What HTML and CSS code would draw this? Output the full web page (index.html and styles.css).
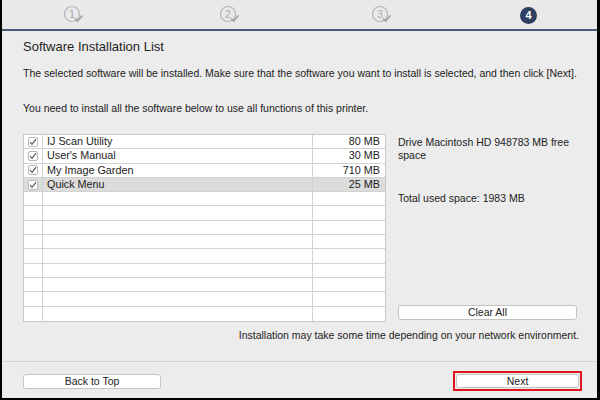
FILE: index.html
```html
<!DOCTYPE html>
<html>
<head>
<meta charset="utf-8">
<link rel="stylesheet" href="styles.css">
</head>
<body>
<div class="frame">
  <div class="steps">
    <div class="step done">
      <svg width="22" height="20" viewBox="0 0 22 20"><circle cx="9" cy="9" r="7.5" fill="none" stroke="#b4b4b4" stroke-width="1.2"/><text x="9" y="12.5" text-anchor="middle" class="stepnum">1</text><path d="M12 13.5 L14.5 16 L19.5 10.5" fill="none" stroke="#a0a0a0" stroke-width="1.6"/></svg>
    </div>
    <div class="step done">
      <svg width="22" height="20" viewBox="0 0 22 20"><circle cx="9" cy="9" r="7.5" fill="none" stroke="#b4b4b4" stroke-width="1.2"/><text x="9" y="12.5" text-anchor="middle" class="stepnum">2</text><path d="M12 13.5 L14.5 16 L19.5 10.5" fill="none" stroke="#a0a0a0" stroke-width="1.6"/></svg>
    </div>
    <div class="step done">
      <svg width="22" height="20" viewBox="0 0 22 20"><circle cx="9" cy="9" r="7.5" fill="none" stroke="#b4b4b4" stroke-width="1.2"/><text x="9" y="12.5" text-anchor="middle" class="stepnum">3</text><path d="M12 13.5 L14.5 16 L19.5 10.5" fill="none" stroke="#a0a0a0" stroke-width="1.6"/></svg>
    </div>
    <div class="step current"><span class="cur">4</span></div>
  </div>
  <div class="content">
    <h1 class="title">Software Installation List</h1>
    <p class="para p1">The selected software will be installed. Make sure that the software you want to install is selected, and then click [Next].</p>
    <p class="para p2">You need to install all the software below to use all functions of this printer.</p>
    <div class="main">
      <div class="table">
        <div class="row"><div class="c-chk"><span class="box"><svg width="8" height="8" viewBox="0 0 8 8"><path d="M1 4.2 L3 6.4 L7 1.2" fill="none" stroke="#555" stroke-width="1.1"/></svg></span></div><div class="c-name">IJ Scan Utility</div><div class="c-size">80 MB</div></div>
        <div class="row"><div class="c-chk"><span class="box"><svg width="8" height="8" viewBox="0 0 8 8"><path d="M1 4.2 L3 6.4 L7 1.2" fill="none" stroke="#555" stroke-width="1.1"/></svg></span></div><div class="c-name">User's Manual</div><div class="c-size">30 MB</div></div>
        <div class="row"><div class="c-chk"><span class="box"><svg width="8" height="8" viewBox="0 0 8 8"><path d="M1 4.2 L3 6.4 L7 1.2" fill="none" stroke="#555" stroke-width="1.1"/></svg></span></div><div class="c-name">My Image Garden</div><div class="c-size">710 MB</div></div>
        <div class="row sel"><div class="c-chk"><span class="box"><svg width="8" height="8" viewBox="0 0 8 8"><path d="M1 4.2 L3 6.4 L7 1.2" fill="none" stroke="#555" stroke-width="1.1"/></svg></span></div><div class="c-name">Quick Menu</div><div class="c-size">25 MB</div></div>
        <div class="row"><div class="c-chk"></div><div class="c-name"></div><div class="c-size"></div></div>
        <div class="row"><div class="c-chk"></div><div class="c-name"></div><div class="c-size"></div></div>
        <div class="row"><div class="c-chk"></div><div class="c-name"></div><div class="c-size"></div></div>
        <div class="row"><div class="c-chk"></div><div class="c-name"></div><div class="c-size"></div></div>
        <div class="row"><div class="c-chk"></div><div class="c-name"></div><div class="c-size"></div></div>
        <div class="row"><div class="c-chk"></div><div class="c-name"></div><div class="c-size"></div></div>
        <div class="row"><div class="c-chk"></div><div class="c-name"></div><div class="c-size"></div></div>
        <div class="row"><div class="c-chk"></div><div class="c-name"></div><div class="c-size"></div></div>
        <div class="row last"><div class="c-chk"></div><div class="c-name"></div><div class="c-size"></div></div>
      </div>
      <div class="side">
        <p class="drive">Drive Macintosh HD 948783 MB free space</p>
        <p class="total">Total used space: 1983 MB</p>
        <div class="spacer"></div>
        <button class="btn clear">Clear All</button>
      </div>
    </div>
    <p class="note">Installation may take some time depending on your network environment.</p>
  </div>
  <div class="footer">
    <button class="btn back">Back to Top</button>
    <div class="next-wrap"><button class="btn next">Next</button></div>
  </div>
</div>
</body>
</html>
```
FILE: styles.css
```css
* { box-sizing: border-box; }
html, body { margin: 0; padding: 0; }
body {
  width: 600px;
  height: 400px;
  background: #000;
  font-family: "Liberation Sans", Arial, sans-serif;
  color: #222;
  overflow: hidden;
}
.frame {
  margin: 0 3px 0 2px;
  height: 398px;
  background: #ececec;
  display: flex;
  flex-direction: column;
}
.steps {
  height: 31px;
  border-bottom: 2px solid #4b5a78;
  background: #e9e9e9;
  display: flex;
  align-items: center;
  padding-top: 1px;
}
.step {
  position: relative;
  display: flex;
  justify-content: center;
}
.step:nth-child(1) { margin-left: 61px; }
.step:nth-child(2) { margin-left: 134px; }
.step:nth-child(3) { margin-left: 130px; }
.step:nth-child(4) { margin-left: 127px; }
.stepnum {
  font-family: "Liberation Sans", Arial, sans-serif;
  font-size: 10px;
  fill: #a8a8a8;
}
.cur {
  width: 17px;
  height: 17px;
  border-radius: 50%;
  background: #2f3f62;
  color: #fff;
  font-size: 11px;
  font-weight: bold;
  display: flex;
  align-items: center;
  justify-content: center;
}
.content {
  padding: 8px 0 0 21px;
  flex: 1;
  display: flex;
  flex-direction: column;
}
.title {
  margin: 0;
  font-size: 13px;
  font-weight: normal;
  color: #1e1e1e;
  line-height: 16px;
}
.para {
  margin: 0;
  font-size: 10.5px;
  line-height: 13px;
  color: #222;
}
.p1 { margin-top: 12px; }
.p2 { margin-top: 22px; }
.main {
  display: flex;
  margin-top: 19px;
}
.table {
  width: 363px;
  background: #fff;
  border: 1px solid #c8c8c8;
  display: flex;
  flex-direction: column;
}
.row {
  height: 14.3px;
  display: flex;
  border-bottom: 1px solid #d2d2d2;
  font-size: 10.8px;
  line-height: 13px;
}
.row.last { border-bottom: none; }
.row.sel { background: #dcdcdc; }
.c-chk {
  width: 19px;
  border-right: 1px solid #d2d2d2;
  display: flex;
  align-items: center;
  justify-content: center;
}
.c-name {
  width: 270px;
  border-right: 1px solid #d2d2d2;
  padding-left: 4px;
}
.c-size {
  flex: 1;
  text-align: right;
  padding-right: 5px;
}
.box {
  width: 10px;
  height: 10px;
  border: 1px solid #b8b8b8;
  border-radius: 2px;
  background: #fff;
  display: flex;
  align-items: center;
  justify-content: center;
}
.side {
  width: 180px;
  margin-left: 12px;
  display: flex;
  flex-direction: column;
}
.drive {
  margin: 2px 0 0 0;
  font-size: 10.5px;
  line-height: 13px;
  width: 172px;
}
.total {
  margin: 30px 0 0 0;
  font-size: 10.5px;
  line-height: 13px;
}
.spacer { flex: 1; }
.btn {
  font-family: "Liberation Sans", Arial, sans-serif;
  font-size: 10.5px;
  color: #222;
  background: #fff;
  border: 1px solid #c4c4c4;
  border-radius: 3px;
  height: 15px;
  padding: 0;
  line-height: 13px;
}
.clear {
  width: 179px;
  margin-bottom: 2px;
}
.note {
  margin: 7px 0 0 0;
  width: 556px;
  text-align: right;
  font-size: 10.5px;
  line-height: 13px;
}
.footer {
  height: 37px;
  border-top: 1px solid #d6d6d6;
  display: flex;
  align-items: center;
  justify-content: space-between;
  padding: 2px 15px 0 21px;
}
.back { width: 138px; }
.next-wrap {
  border: 2px solid #e0141e;
  padding: 1px;
}
.next {
  width: 123px;
  height: 14px;
  display: block;
}
```
